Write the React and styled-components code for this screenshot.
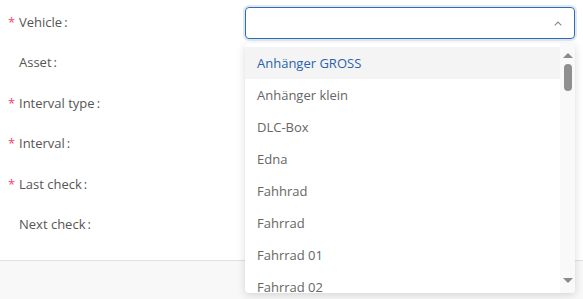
import React from 'react'
import styled, { createGlobalStyle } from 'styled-components'

const Global = createGlobalStyle`
  html, body { margin: 0; padding: 0; background: #fff; }
  body { font-family: "Open Sans", "Noto Sans", sans-serif; font-size: 13px; }
`

const Page = styled.div`
  position: relative;
  width: 583px;
  height: 299px;
  overflow: hidden;
  display: flex;
  flex-direction: column;
`

const Form = styled.div`
  display: grid;
  grid-template-columns: 245px 330px;
  grid-auto-rows: 32px;
  row-gap: 8.4px;
  padding-top: 7px;
  height: 261px;
  box-sizing: border-box;
  border-bottom: 1px solid #e0e0e0;
`

const Label = styled.div`
  display: flex;
  align-items: center;
  padding-left: 19px;
  position: relative;
  color: #555;
  margin-top: -2px;
  &::before {
    content: ${p => (p.$required ? '"*"' : '""')};
    position: absolute;
    left: 8px;
    top: 8px;
    color: #f0476b;
    font-size: 13px;
  }
`

const Colon = styled.span`
  margin-left: 2px;
`

const Field = styled.div``

const Select = styled.div`
  height: 32px;
  box-sizing: border-box;
  border: 1px solid #2f6db0;
  border-radius: 4px;
  box-shadow: 0 0 0 2px rgba(47, 109, 176, 0.15);
  display: flex;
  align-items: center;
  justify-content: flex-end;
  padding-right: 12px;
`

const Footer = styled.div`
  flex: 1;
  background: #f8f8f8;
`

const Dropdown = styled.div`
  position: absolute;
  left: 245px;
  top: 43px;
  width: 330px;
  height: 250px;
  background: #fff;
  border-radius: 4px;
  box-shadow: 0 2px 8px rgba(0, 0, 0, 0.15);
  display: flex;
  overflow: hidden;
`

const List = styled.div`
  flex: 1;
  padding-top: 4px;
  overflow: hidden;
`

const Item = styled.div`
  height: 32px;
  display: flex;
  align-items: center;
  padding-left: 12px;
  color: ${p => (p.$active ? '#2a62ad' : '#666')};
  background: ${p => (p.$active ? '#f4f4f4' : 'transparent')};
`

const Scrollbar = styled.div`
  width: 15px;
  background: #f9f9f9;
  display: flex;
  flex-direction: column;
  align-items: center;
  padding: 10px 0 10px;
`

const Thumb = styled.div`
  width: 8px;
  height: 27px;
  border-radius: 4px;
  background: #8f8f8f;
  margin-top: 6px;
`

const Spacer = styled.div`
  flex: 1;
`

const items = [
  'Anhänger GROSS',
  'Anhänger klein',
  'DLC-Box',
  'Edna',
  'Fahhrad',
  'Fahrrad',
  'Fahrrad 01',
  'Fahrrad 02',
]

const labels = [
  ['Vehicle', true],
  ['Asset', false],
  ['Interval type', true],
  ['Interval', true],
  ['Last check', true],
  ['Next check', false],
]

const Triangle = ({ down }) => (
  <svg width="10" height="5" viewBox="0 0 10 5">
    <path d={down ? 'M0 0h10L5 5z' : 'M0 5h10L5 0z'} fill="#8a8a8a" />
  </svg>
)

export default function App() {
  return (
    <>
      <Global />
      <Page>
        <Form>
          {labels.map(([text, req], i) => (
            <React.Fragment key={text}>
              <Label $required={req}>{text}<Colon>:</Colon></Label>
              <Field>
                {i === 0 && (
                  <Select>
                    <svg width="8" height="5" viewBox="0 0 8 5">
                      <path d="M0.7 4.3L4 1l3.3 3.3" fill="none" stroke="#888" strokeWidth="1.1" />
                    </svg>
                  </Select>
                )}
              </Field>
            </React.Fragment>
          ))}
        </Form>
        <Footer />
        <Dropdown>
          <List>
            {items.map((t, i) => (
              <Item key={t} $active={i === 0}>{t}</Item>
            ))}
          </List>
          <Scrollbar>
            <Triangle />
            <Thumb />
            <Spacer />
            <Triangle down />
          </Scrollbar>
        </Dropdown>
      </Page>
    </>
  )
}
